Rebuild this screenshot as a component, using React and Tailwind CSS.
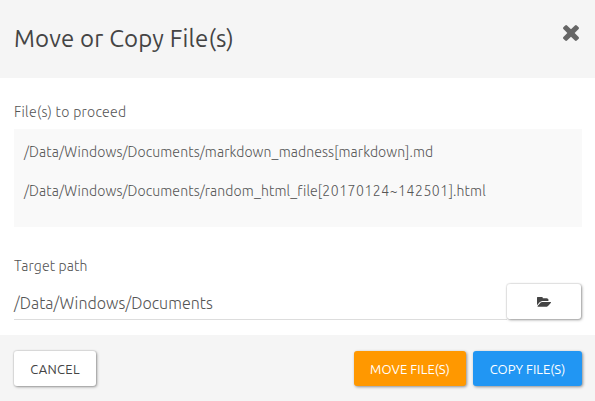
import React from 'react';

const BUTTON = 'flex h-[35px] items-center justify-center rounded-[3px] text-[13px] whitespace-nowrap';

function CloseIcon() {
  return (
    <svg className="h-4 w-4 fill-[#666]" viewBox="302 366 1188 1188">
      <path d="M1490 1322q0 40-28 68l-136 136q-28 28-68 28t-68-28l-294-294-294 294q-28 28-68 28t-68-28l-136-136q-28-28-28-68t28-68l294-294-294-294q-28-28-28-68t28-68l136-136q28-28 68-28t68 28l294 294 294-294q28-28 68-28t68 28l136 136q28 28 28 68t-28 68l-294 294 294 294q28 28 28 68z" />
    </svg>
  );
}

function FolderIcon() {
  return (
    <svg className="h-[10px] w-[14px] fill-[#444]" viewBox="0 256 1879 1280">
      <path d="M1879 952q0 31-31 66l-336 396q-43 51-120.5 86.5t-143.5 35.5h-1088q-34 0-60.5-13t-26.5-43q0-31 31-66l336-396q43-51 120.5-86.5t143.5-35.5h1088q34 0 60.5 13t26.5 43zm-343-344v160h-832q-94 0-197 47.5t-164 119.5l-337 396-5 6q0-4-.5-12.5t-.5-12.5v-960q0-92 66-158t158-66h320q92 0 158 66t66 158v32h544q92 0 158 66t66 158z" />
    </svg>
  );
}

export default function App() {
  return (
    <div className="flex h-[401px] w-[595px] flex-col overflow-hidden bg-white font-['Ubuntu','Noto_Sans',sans-serif] text-[14px] font-light text-[#555]">
      <header className="flex h-[78px] shrink-0 items-start justify-between bg-[#f5f5f5] pr-4 pl-[14px]">
        <h1 className="pt-[23px] text-[24px] leading-8 font-normal tracking-[0.16px] text-[#444]">Move or Copy File(s)</h1>
        <button className="pt-[25px]" aria-label="Close"><CloseIcon /></button>
      </header>

      <main className="flex h-[257px] shrink-0 flex-col pt-[24px] pr-[13px] pl-[14px]">
        <div className="h-[27px] leading-5 tracking-[0.29px]">File(s) to proceed</div>
        <div className="h-[98px] bg-[#f9f9f9] px-[10px] pt-[13px] leading-5">
          <p className="mb-[19px] tracking-[0.11px]">/Data/Windows/Documents/markdown_madness[markdown].md</p>
          <p className="tracking-[0.11px]">/Data/Windows/Documents/random_html_file[<span className="tracking-[0.53px]">20170124~142501</span>].html</p>
        </div>
        <div className="mt-[29px] leading-5 tracking-[0.12px]">Target path</div>
        <div className="mt-[8px] flex h-[36px] items-start">
          <div className="flex h-[36px] flex-1 items-center border-b border-[#ddd] pt-[3px] text-[16px] leading-6 tracking-[0.04px]">
            <span>/Data/Windows/Documents</span>
          </div>
          <button className={`${BUTTON} mr-px w-[74px] bg-white shadow-[0_0_1px_1px_rgba(0,0,0,0.08),1px_1px_3px_rgba(0,0,0,0.36)]`} aria-label="Browse">
            <FolderIcon />
          </button>
        </div>
      </main>

      <footer className="flex h-[66px] shrink-0 items-start bg-[#f5f5f5] pt-4 pr-[13px] pl-[14px] font-normal">
        <button className={`${BUTTON} w-[82px] bg-white pt-[2px] tracking-[0.3px] text-[#444] shadow-[0_0_1px_1px_rgba(0,0,0,0.08),1px_1px_3px_rgba(0,0,0,0.36)]`}>CANCEL</button>
        <button className={`${BUTTON} ml-auto w-[112px] bg-[#ff9800] pt-[2px] tracking-[0.1px] text-white shadow-[1px_1px_3px_rgba(0,0,0,0.42)]`}>MOVE FILE(S)</button>
        <button className={`${BUTTON} ml-[7px] w-[109px] bg-[#2196f3] pt-[2px] tracking-[0.05px] text-white shadow-[1px_1px_3px_rgba(0,0,0,0.42)]`}>COPY FILE(S)</button>
      </footer>
    </div>
  );
}
